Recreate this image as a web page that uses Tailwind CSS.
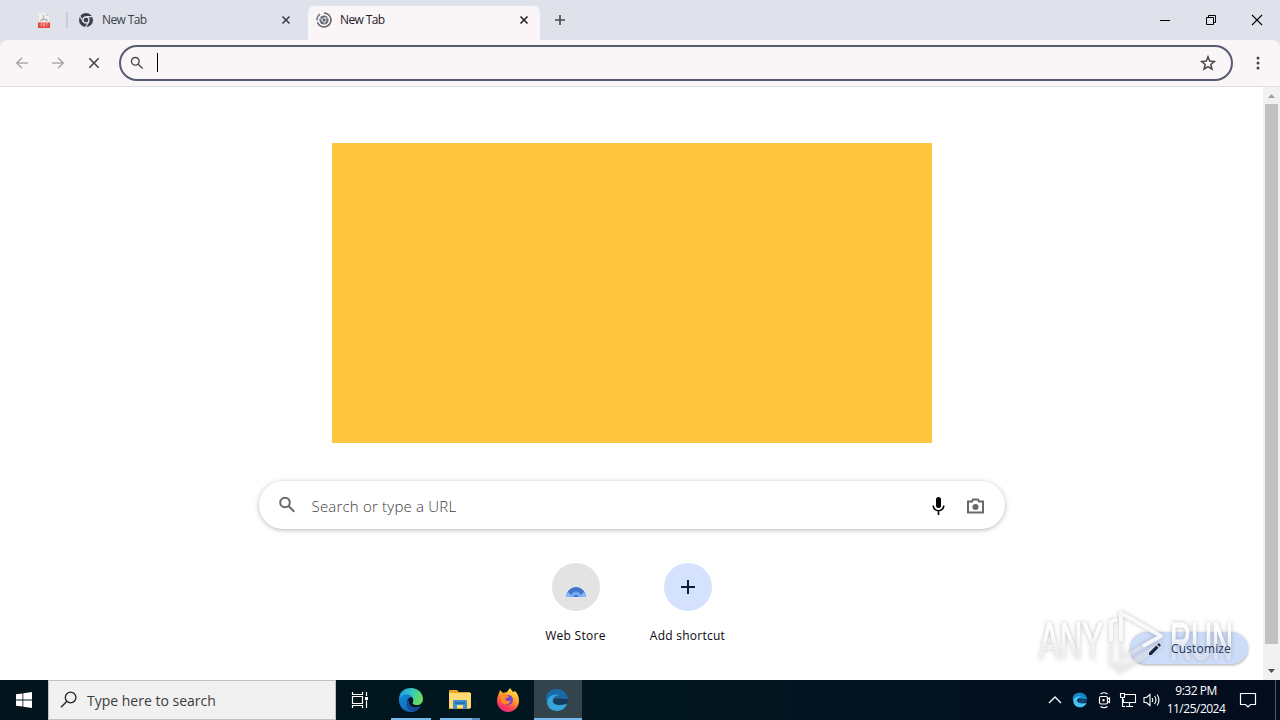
<!DOCTYPE html>
<html lang="en">

<head>
    <meta charset="UTF-8">
    <meta name="viewport" content="width=device-width, initial-scale=1.0">
    <title>New Tab</title>
    <script src="https://cdn.jsdelivr.net/npm/@tailwindcss/browser@4"></script>
</head>

<body class="w-[1280px] h-[720px] overflow-hidden flex flex-col bg-white font-['Open_Sans','Noto_Sans',sans-serif]">

    <!-- tab strip -->
    <div class="h-10 shrink-0 bg-[#dfe2eb] flex text-xs text-[#1f2026]">
        <div class="w-[66px] pl-[37px] pt-[13px]">
            <svg width="14" height="16" viewBox="0 0 14 16">
                <path d="M2 0h7l3 3v12H2z" fill="#f1efee" />
                <path d="M9 0v3h3" fill="#cfcdcd" />
                <path d="M3 8c3-1 4-4 3.500-6M6 4c1 2 2.500 3 5 3.500M4 7.500c2-1 4-1 6-.5" fill="none" stroke="#aaa9a5" />
                <path d="M1 9.500h12V15H1z" fill="#e8453c" />
                <path d="M4 13.500v-3h1v1.500H4M6.500 10.500v3h1v-3zM9.500 13.500v-3h1.500M9.500 12h1" fill="none" stroke="#f7b5ae" stroke-width=".7" />
            </svg>
        </div>
        <div class="w-0.5 h-4 mt-3 bg-[#c9cdd8]"></div>
        <div class="w-60 flex pl-2.5 pt-3 pr-3">
            <svg width="16" height="16" viewBox="0 0 16 16">
                <circle cx="8" cy="8" r="7" fill="#3c4049" />
                <circle cx="8" cy="8" r="3" fill="#3c4049" stroke="#dfe2eb" stroke-width="1.300" />
                <path d="M8 4.700h6.500M5.200 9.700 2 4.200M10.800 9.700 7.600 15" stroke="#dfe2eb" stroke-width="1.200" />
            </svg>
            <span class="ml-2 leading-4 tracking-[-0.6px] text-[#3d414b]">New Tab</span>
            <svg class="ml-auto mr-1" width="12" height="16" viewBox="0 0 12 16">
                <path d="m2.500 4.500 7 7m0-7-7 7" stroke="#3c4049" stroke-width="1.600" />
            </svg>
        </div>
        <div class="w-[232px] mt-1.5 flex bg-[#faf6f8] rounded-t-md pt-1.5 pl-2 pr-2.5">
            <svg width="16" height="16" viewBox="0 0 16 16" fill="none">
                <path d="M8 1a7 7 0 1 1-6.600 9.300" stroke="#5f6470" stroke-width="1.600" />
                <path d="M1 8.500A7 7 0 0 1 4 2.200" stroke="#777c87" stroke-width="1.600" />
                <circle cx="8" cy="8" r="4.600" fill="#686c76" />
                <circle cx="8" cy="8" r="2" fill="#555a65" stroke="#e5e3e7" />
                <path d="M8 5.900h4M6.200 9 4.200 5.800M9.800 9l-2 3.500" stroke="#e5e3e7" stroke-width=".8" />
            </svg>
            <span class="ml-2 leading-4 tracking-[-0.6px]">New Tab</span>
            <svg class="ml-auto" width="12" height="16" viewBox="0 0 12 16">
                <path d="m2.500 4.500 7 7m0-7-7 7" stroke="#202228" stroke-width="1.600" />
            </svg>
        </div>
        <svg class="mt-3 ml-3" width="16" height="16" viewBox="0 0 16 16">
            <path d="M8 3v10M3 8h10" stroke="#45474d" stroke-width="1.600" />
        </svg>
        <div class="ml-auto flex mt-[14px] mr-[17px] gap-[34px]">
            <svg width="12" height="12" viewBox="0 0 12 12">
                <path d="M1 6.500h10" stroke="#000" />
            </svg>
            <svg width="12" height="12" viewBox="0 0 12 12" fill="none" stroke="#000">
                <path d="M1.500 3.500h7v7h-7zM3.500 3.500v-2h7v7h-2" />
            </svg>
            <svg width="12" height="12" viewBox="0 0 12 12">
                <path d="m1 1 10 10M11 1 1 11" stroke="#000" stroke-width="1.100" />
            </svg>
        </div>
    </div>

    <!-- toolbar -->
    <div class="h-[47px] shrink-0 bg-[#dfe2eb]">
        <div class="h-full bg-[#faf6f8] rounded-t-lg border-b border-[#dfe0e6] flex items-center">
            <div class="flex gap-5 pl-3.5 w-[119px]">
                <svg width="16" height="16" viewBox="0 0 16 16" fill="none" stroke="#aaa6a9" stroke-width="1.500">
                    <path d="M14 8H3M8 2.700 2.700 8 8 13.300" />
                </svg>
                <svg width="16" height="16" viewBox="0 0 16 16" fill="none" stroke="#aaa6a9" stroke-width="1.500">
                    <path d="M2 8h11M8 2.700 13.300 8 8 13.300" />
                </svg>
                <svg width="16" height="16" viewBox="0 0 16 16" fill="none" stroke="#454347" stroke-width="1.600">
                    <path d="m3.300 3.300 9.400 9.400m0-9.400-9.400 9.400" />
                </svg>
            </div>
            <div class="w-[1114px] h-9 rounded-full border-2 border-[#565b70] flex items-center pl-[9px] pr-[15px]">
                <svg width="14" height="14" viewBox="0 0 14 14" fill="none" stroke="#4b494d" stroke-width="1.400">
                    <circle cx="5.300" cy="5.300" r="3.800" />
                    <path d="m8.200 8.200 4.400 4.400" />
                </svg>
                <div class="w-px h-[19px] ml-[13px] mb-px bg-black"></div>
                <svg class="ml-auto" width="16" height="16" viewBox="0 0 16 16" fill="none" stroke="#49464b" stroke-width="1.500">
                    <path d="m8 1.800 1.700 4.300 4.700.4-3.600 3 1.200 4.600L8 11.600l-4 2.500 1.200-4.600-3.600-3 4.700-.4z" />
                </svg>
            </div>
            <svg class="ml-[17px]" width="16" height="16" viewBox="0 0 16 16" fill="#454347">
                <circle cx="8" cy="3" r="1.500" />
                <circle cx="8" cy="8" r="1.500" />
                <circle cx="8" cy="13" r="1.500" />
            </svg>
        </div>
    </div>

    <!-- new tab page -->
    <div class="h-[593px] shrink-0 flex relative">
        <div class="w-[1263px] flex flex-col items-center">
            <div class="w-[600px] h-[300px] mt-14 bg-[#ffc640]"></div>
            <div class="w-[746px] h-12 mt-[38px] rounded-full bg-white shadow-[0_1px_5px_rgba(32,33,36,0.32)] flex items-center pl-[18px] pr-[19px]">
                <svg width="20" height="20" viewBox="0 0 20 20" fill="none" stroke="#68696b" stroke-width="2">
                    <circle cx="8" cy="7.500" r="4.800" />
                    <path d="m11.500 11 5.800 5.800" />
                </svg>
                <span class="ml-[15px] pt-px text-[15px] leading-5 font-light tracking-[0.2px] text-[#3c3d40]">Search or type a URL</span>
                <svg class="ml-auto mt-px" width="20" height="20" viewBox="0 0 20 20">
                    <rect x="7" y="1" width="5" height="11" rx="2.500" fill="#000" />
                    <path d="M4.200 9.500a5.300 5.300 0 0 0 10.600 0M9.500 15v4" fill="none" stroke="#000" stroke-width="1.600" />
                </svg>
                <svg class="ml-[17px] mt-px" width="20" height="20" viewBox="0 0 20 20">
                    <path d="M2 5.500h4l1-2h5l1 2h4v11H2z" fill="none" stroke="#686868" stroke-width="2" />
                    <circle cx="9.500" cy="11" r="3.100" fill="#686868" />
                </svg>
            </div>
            <div class="flex mt-[34px] text-xs text-[#08090b]">
                <div class="w-28 flex flex-col items-center">
                    <div class="size-12 rounded-full bg-[#e3e3e3] flex justify-center">
                        <svg class="mt-[22px]" width="20" height="12" viewBox="0 0 20 12">
                            <path d="M0 12a10 10 0 0 1 20 0z" fill="#4272cf" />
                            <path d="M0 12a10 10 0 0 1 2-5l5 5zM20 12a10 10 0 0 0-2-5l-5 5z" fill="#8cb8f5" />
                            <path d="M4.500 12a5.500 5.500 0 0 1 11 0z" fill="#6aa3f0" />
                            <path d="M7 12a3 3 0 0 1 6 0" fill="#3976e2" stroke="#9dc2f6" />
                        </svg>
                    </div>
                    <span class="mt-[17px] leading-4 tracking-[0.3px]">Web Store</span>
                </div>
                <div class="w-28 flex flex-col items-center">
                    <div class="size-12 rounded-full bg-[#d5e2fd] flex items-center justify-center">
                        <svg width="16" height="16" viewBox="0 0 16 16">
                            <path d="M8 1v14M1 8h14" stroke="#0b1c38" stroke-width="2" />
                        </svg>
                    </div>
                    <span class="mt-[17px] leading-4 tracking-[0.25px]">Add shortcut</span>
                </div>
            </div>
        </div>

        <div class="w-[17px] bg-[#f1f1f1] flex flex-col items-center">
            <svg width="17" height="17" viewBox="0 0 17 17">
                <path d="m5 11 3.500-4 3.500 4z" fill="#a0a0a0" />
            </svg>
            <div class="w-[13px] h-[540px] bg-[#c1c1c1]"></div>
            <svg class="mt-[19px]" width="17" height="17" viewBox="0 0 17 17">
                <path d="m5 6 3.500 4L12 6z" fill="#505050" />
            </svg>
        </div>

        <!-- customize button, the watermark runs between its pill and its label -->
        <div class="absolute left-[1130px] top-[545px] w-[118px] h-8 rounded-full bg-[#cddcf9] shadow-[0_1px_3px_rgba(0,0,0,0.35)]"></div>

        <svg class="absolute left-[1030px] top-[518px] drop-shadow-[0_0_2px_rgba(0,0,0,0.28)]" width="210" height="72" viewBox="0 0 210 72" font-family="Liberation Sans, sans-serif" font-size="51">
            <defs>
                <linearGradient id="mark" x1="0" x2="0" y1="0" y2="1">
                    <stop offset=".35" stop-color="#fff" stop-opacity=".95" />
                    <stop offset=".75" stop-color="#f4f4f6" stop-opacity=".5" />
                </linearGradient>
            </defs>
            <g fill="url(#mark)" stroke="url(#mark)" stroke-width="1.200">
                <text x="9" y="54" textLength="64" lengthAdjust="spacingAndGlyphs">ANY</text>
                <text x="140" y="54" textLength="63" lengthAdjust="spacingAndGlyphs">RUN</text>
            </g>
            <g fill="none" stroke="#fff" stroke-opacity=".85" stroke-width="4" stroke-linejoin="round">
                <path d="M91 36V8l40 23-18 10" />
                <path d="M87 14 81 17v19" />
                <path d="M91 36v18l22-13M81 36v24l7 3M91 64l40-25M89 57v10l42-26" stroke="#f2f2f4" stroke-opacity=".5" />
            </g>
        </svg>

        <div class="absolute left-[1147px] top-[546px] h-8 flex items-center text-xs text-[#26365a]">
            <svg width="16" height="16" viewBox="0 0 16 16" fill="#172440">
                <path d="M2 11.700 9.300 4.400l2.300 2.300L4.300 14H2zM10.200 3.500l1.100-1.100q.5-.4 1 0l1.300 1.300q.4.500 0 1l-1.100 1.100z" />
            </svg>
            <span class="ml-2 tracking-[0.15px]">Customize</span>
        </div>
    </div>

    <!-- taskbar -->
    <div class="h-10 shrink-0 bg-linear-to-r from-[#02151d] via-[#021720] to-[#030c1e] flex">
        <div class="w-12 flex items-center justify-center">
            <svg width="16" height="16" viewBox="0 0 16 16" fill="#fff">
                <path d="M0 2.300 6.500 1.400V7.600H0zM7.300 1.300 16 0v7.600H7.300zM0 8.400h6.500v6.200L0 13.700zM7.300 8.400H16V16l-8.700-1.300z" />
            </svg>
        </div>
        <div class="w-72 bg-[#f1f1f1] border border-[#bfc0c1] flex items-center pl-[11px]">
            <svg width="18" height="18" viewBox="0 0 18 18" fill="none" stroke="#222" stroke-width="1.300">
                <circle cx="10.600" cy="6.500" r="5.300" />
                <path d="M6.900 10.300 1 16.300" />
            </svg>
            <span class="ml-[9px] pt-0.5 text-sm text-[#3c3c3c]">Type here to search</span>
        </div>
        <div class="w-12 flex items-center justify-center">
            <svg width="18" height="18" viewBox="0 0 18 18" fill="none" stroke="#fff" stroke-width="1.200">
                <path d="M1.500 5.500h10v7h-10zM1.500 1v2.500h10V1M1.500 17v-2.500h10V17M15.500 1v4M15.500 9.500V17" />
                <path d="M14 6h3v3h-3z" fill="#fff" stroke="none" />
            </svg>
        </div>
        <div class="w-[49px] ml-0.5 flex flex-col items-center pt-[7px]">
            <svg width="26" height="26" viewBox="0 0 26 26">
                <defs>
                    <linearGradient id="edgeTop" x1="0" x2="1" y1="0" y2=".3">
                        <stop stop-color="#1697dc" />
                        <stop offset=".55" stop-color="#38c7c1" />
                        <stop offset="1" stop-color="#68db61" />
                    </linearGradient>
                    <linearGradient id="edgeLow" x1="0" x2="1" y1="0" y2="1">
                        <stop stop-color="#148bdc" />
                        <stop offset="1" stop-color="#1059b0" />
                    </linearGradient>
                </defs>
                <path d="M1 13C1 5 6 1 13 1c7 0 12 5 12 11 0 4-3 6-6 6-4 0-5-1.500-4-3 2-5-4-9-14-2z" fill="url(#edgeTop)" />
                <path d="M1 13c1-6 10-8 13-3-4 0-6 4-4 8 2 3 6 4 12 2-2 3-5 5-9 5C6 25 1 20 1 13z" fill="url(#edgeLow)" />
                <path d="M10 13c-4 6 0 11 6 11 4-1 6-4 6.500-5-4 2-9 2-11-2-1-2 0-3.500-1.500-4z" fill="#164b97" />
            </svg>
            <div class="w-10 h-0.5 mt-[5px] bg-[#76b9ed]"></div>
        </div>
        <div class="w-[49px] flex flex-col items-center pt-[9px]">
            <svg width="22" height="22" viewBox="0 0 22 22">
                <path d="M0 2q0-1 1-1h7l2 2h11v17H0z" fill="#e9a529" />
                <path d="M0 4h22v15H0z" fill="#ffdc73" />
                <path d="M4 20v-8q0-1 1-1h12q1 0 1 1v8h-4v-4H8v4z" fill="#3f91d0" />
                <path d="M6 13h10v2H6z" fill="#2870b3" />
            </svg>
            <div class="w-10 h-0.5 mt-[7px] bg-[#76b9ed] border-r-[8px] border-[#568bba]"></div>
        </div>
        <div class="w-12 flex items-start justify-center pt-[7px]">
            <svg width="26" height="26" viewBox="0 0 26 26">
                <defs>
                    <linearGradient id="fox" x1=".8" x2=".3" y1="0" y2="1">
                        <stop stop-color="#fff04c" />
                        <stop offset=".45" stop-color="#ff9b28" />
                        <stop offset=".75" stop-color="#ff4450" />
                        <stop offset="1" stop-color="#e42285" />
                    </linearGradient>
                </defs>
                <path d="M4 6 5 3l3 3 4-1 3-4 3 4 2-1c3 3 4 6 4 10 0 6-5 11-11 11S2 20 2 14c0-3 1-6 2-8z" fill="url(#fox)" />
                <circle cx="13" cy="13" r="5" fill="#7542d8" />
                <path d="M6 8c4-2 6 0 8 2l-4 2c2 3 5 2 6 1-1 5-8 6-10 1z" fill="#ff8b25" />
            </svg>
        </div>
        <div class="w-12 ml-0.5 bg-[#34444c] flex flex-col items-center pt-2">
            <svg class="mr-0.5" width="24" height="24" viewBox="0 0 24 24">
                <path d="M1 10C1 4 6 1 12 1c6 0 10 4 11 10l-11-1c-4 0-6 2-5 7-3-1-6-3-6-7z" fill="#186ba8" />
                <path d="M2 14C3 8 8 5 15 7c-6 0-8 4-7 7 2 4 9 3 14 2-2 5-6 7-10 7-6 0-10-4-10-9z" fill="#36a5dc" />
                <path d="M8 13c0 4 7 5 14 2l1-4H12z" fill="#123c60" />
            </svg>
            <div class="w-12 h-0.5 mt-1.5 bg-[#76b9ed]"></div>
        </div>

        <div class="ml-auto flex items-center">
            <svg width="14" height="14" viewBox="0 0 14 14" fill="none" stroke="#fff" stroke-width="1.300">
                <path d="m1 10 6-6 6 6" />
            </svg>
            <svg class="ml-2.5" width="16" height="16" viewBox="0 0 24 24">
                <path d="M1 10C1 4 6 1 12 1c6 0 10 4 11 10l-11-1c-4 0-6 2-5 7-3-1-6-3-6-7z" fill="#1687c5" />
                <path d="M2 14C3 8 8 5 15 7c-6 0-8 4-7 7 2 4 9 3 14 2-2 5-6 7-10 7-6 0-10-4-10-9z" fill="#45c4f3" />
                <path d="M8 13c0 4 7 5 14 2l1-4H12z" fill="#104776" />
            </svg>
            <svg class="ml-2.5" width="14" height="18" viewBox="0 0 14 18" fill="none" stroke="#fff" stroke-width="1.200">
                <rect x="1.500" y="5.500" width="8" height="7.500" rx="1.500" />
                <path d="M9.500 8l2-1v4.500l-2-1M2.500 3q3.500-2.500 7 0M2.500 15.500q3.500 2.500 7 0" />
                <circle cx="5.500" cy="9.200" r=".6" />
            </svg>
            <svg class="ml-[7px]" width="18" height="16" viewBox="0 0 18 16" fill="none" stroke="#fff" stroke-width="1.100">
                <path d="M6 2.500h10.500v8H4.500V7M10.500 11v3M7 14.500h7M1.500 1.500h4v4h-4zM3.500 5.500v9H6" />
            </svg>
            <svg class="ml-1.5" width="18" height="16" viewBox="0 0 18 16" fill="none" stroke="#fff" stroke-width="1.100">
                <path d="M1 5.500h2.500L7 2.500v11L3.500 10.500H1zM9 6q1.500 2 0 4M11.500 4q3 4 0 8M14 2.500q4 5.500 0 11" />
            </svg>
            <div class="w-[70px] text-center text-xs leading-[18px] tracking-[-0.5px] text-white whitespace-nowrap">
                <div>9:32 PM</div>
                <div>11/25/2024</div>
            </div>
            <svg class="ml-2" width="18" height="18" viewBox="0 0 18 18" fill="none" stroke="#fff" stroke-width="1.200">
                <path d="M1.500 2.500h15v11h-5L9 16l-2.500-2.500h-5z" />
            </svg>
            <div class="w-px h-10 ml-[18px] mr-1 bg-[#50596b]"></div>
        </div>
    </div>
</body>

</html>
